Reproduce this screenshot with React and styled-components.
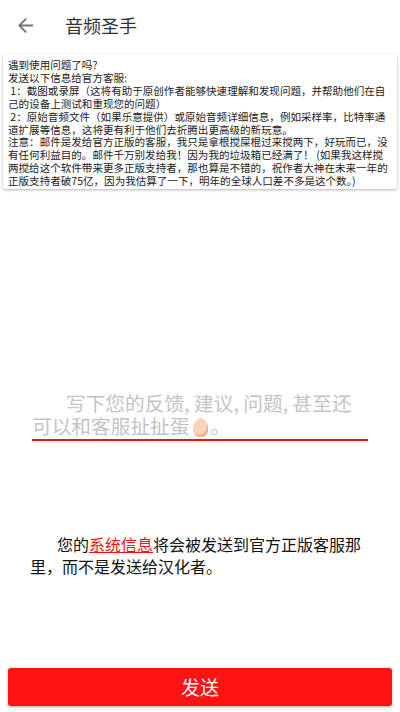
import React from "react";
import styled, { createGlobalStyle } from "styled-components";

const GlobalStyle = createGlobalStyle`
  html, body {
    margin: 0;
    padding: 0;
    background: #fff;
  }
  body {
    font-family: "Noto Sans CJK SC", "Roboto", sans-serif;
  }
`;

const Page = styled.div`
  width: 400px;
  height: 712px;
  display: flex;
  flex-direction: column;
  overflow: hidden;
`;

const Toolbar = styled.header`
  height: 50px;
  display: flex;
  align-items: center;
  padding-left: 18px;
  flex-shrink: 0;
`;

const BackIcon = styled.svg`
  width: 15px;
  height: 15px;
  fill: #757575;
`;

const Title = styled.h1`
  margin: 0 0 0 32px;
  font-size: 18px;
  line-height: 24px;
  font-weight: 400;
  color: #333;
`;

const NoticeCard = styled.div`
  margin: 4px 3px 0;
  padding: 5px 5px 1px;
  background: #fff;
  border-radius: 2px;
  box-shadow: 0 1px 3px rgba(0, 0, 0, 0.3);
  font-size: 10.55px;
  line-height: 12.9px;
  color: #222;
`;

const NoticeLine = styled.div``;

const FeedbackField = styled.div`
  margin: 202px 32px 0;
  padding-bottom: 2px;
  border-bottom: 2px solid #f31212;
  font-size: 19.7px;
  line-height: 23px;
  color: #c4c4c4;
  text-indent: 34px;
`;

const Egg = styled.svg`
  width: 17px;
  height: 21px;
  margin: -6px 2px -4px 2px;
  vertical-align: 0;
`;

const InfoText = styled.p`
  margin: 92px 38px 0 30px;
  font-size: 16px;
  line-height: 22px;
  color: #111;
  text-indent: 27px;
`;

const InfoLink = styled.span`
  color: #f01414;
  text-decoration: underline;
`;

const SendButton = styled.button`
  margin: auto 8px 6px;
  padding: 0 0 2px;
  height: 38px;
  flex-shrink: 0;
  border: 0;
  border-radius: 3px;
  background: #ff1212;
  color: #fff;
  font-family: inherit;
  font-size: 19px;
  box-shadow: 0 1px 3px rgba(0, 0, 0, 0.35);
`;

const notice = [
  "遇到使用问题了吗?",
  "发送以下信息给官方客服:",
  "\u00a01：截图或录屏（这将有助于原创作者能够快速理解和发现问题，并帮助他们在自己的设备上测试和重现您的问题）",
  "\u00a02：原始音频文件（如果乐意提供）或原始音频详细信息，例如采样率，比特率通道扩展等信息，这将更有利于他们去折腾出更高级的新玩意。",
  "注意：邮件是发给官方正版的客服，我只是拿根搅屎棍过来搅两下，好玩而已，没有任何利益目的。邮件千万别发给我！因为我的垃圾箱已经满了！ (如果我这样搅两搅给这个软件带来更多正版支持者，那也算是不错的，祝作者大神在未来一年的正版支持者破75亿，因为我估算了一下，明年的全球人口差不多是这个数。)",
];

const App = () => {
  return (
    <Page>
      <GlobalStyle />
      <Toolbar>
        <BackIcon viewBox="0 0 16 16">
          <path d="M16 7H3.8l5.6-5.6L8 0 0 8l8 8 1.4-1.4L3.8 9H16z" />
        </BackIcon>
        <Title>音频圣手</Title>
      </Toolbar>
      <NoticeCard>
        {notice.map((line) => (
          <NoticeLine key={line}>{line}</NoticeLine>
        ))}
      </NoticeCard>
      <FeedbackField>
        写下您的反馈, 建议, 问题, 甚至还可以和客服扯扯蛋
        <Egg viewBox="0 0 18 22">
          <path
            d="M9 1c4 0 8 6 8 12s-4 8-8 8-8-3-8-8S5 1 9 1z"
            fill="#f6d5b8"
          />
          <path
            d="M15 6c2 3 2 7 2 8 0 5-4 7-8 7-3 0-6-1-7-4 3 2 6 2 9 1 4-2 5-7 4-12z"
            fill="#e9b58c"
          />
        </Egg>
        。
      </FeedbackField>
      <InfoText>
        您的<InfoLink>系统信息</InfoLink>将会被发送到官方正版客服那里，而不是发送给汉化者。
      </InfoText>
      <SendButton>发送</SendButton>
    </Page>
  );
};

export default App;
